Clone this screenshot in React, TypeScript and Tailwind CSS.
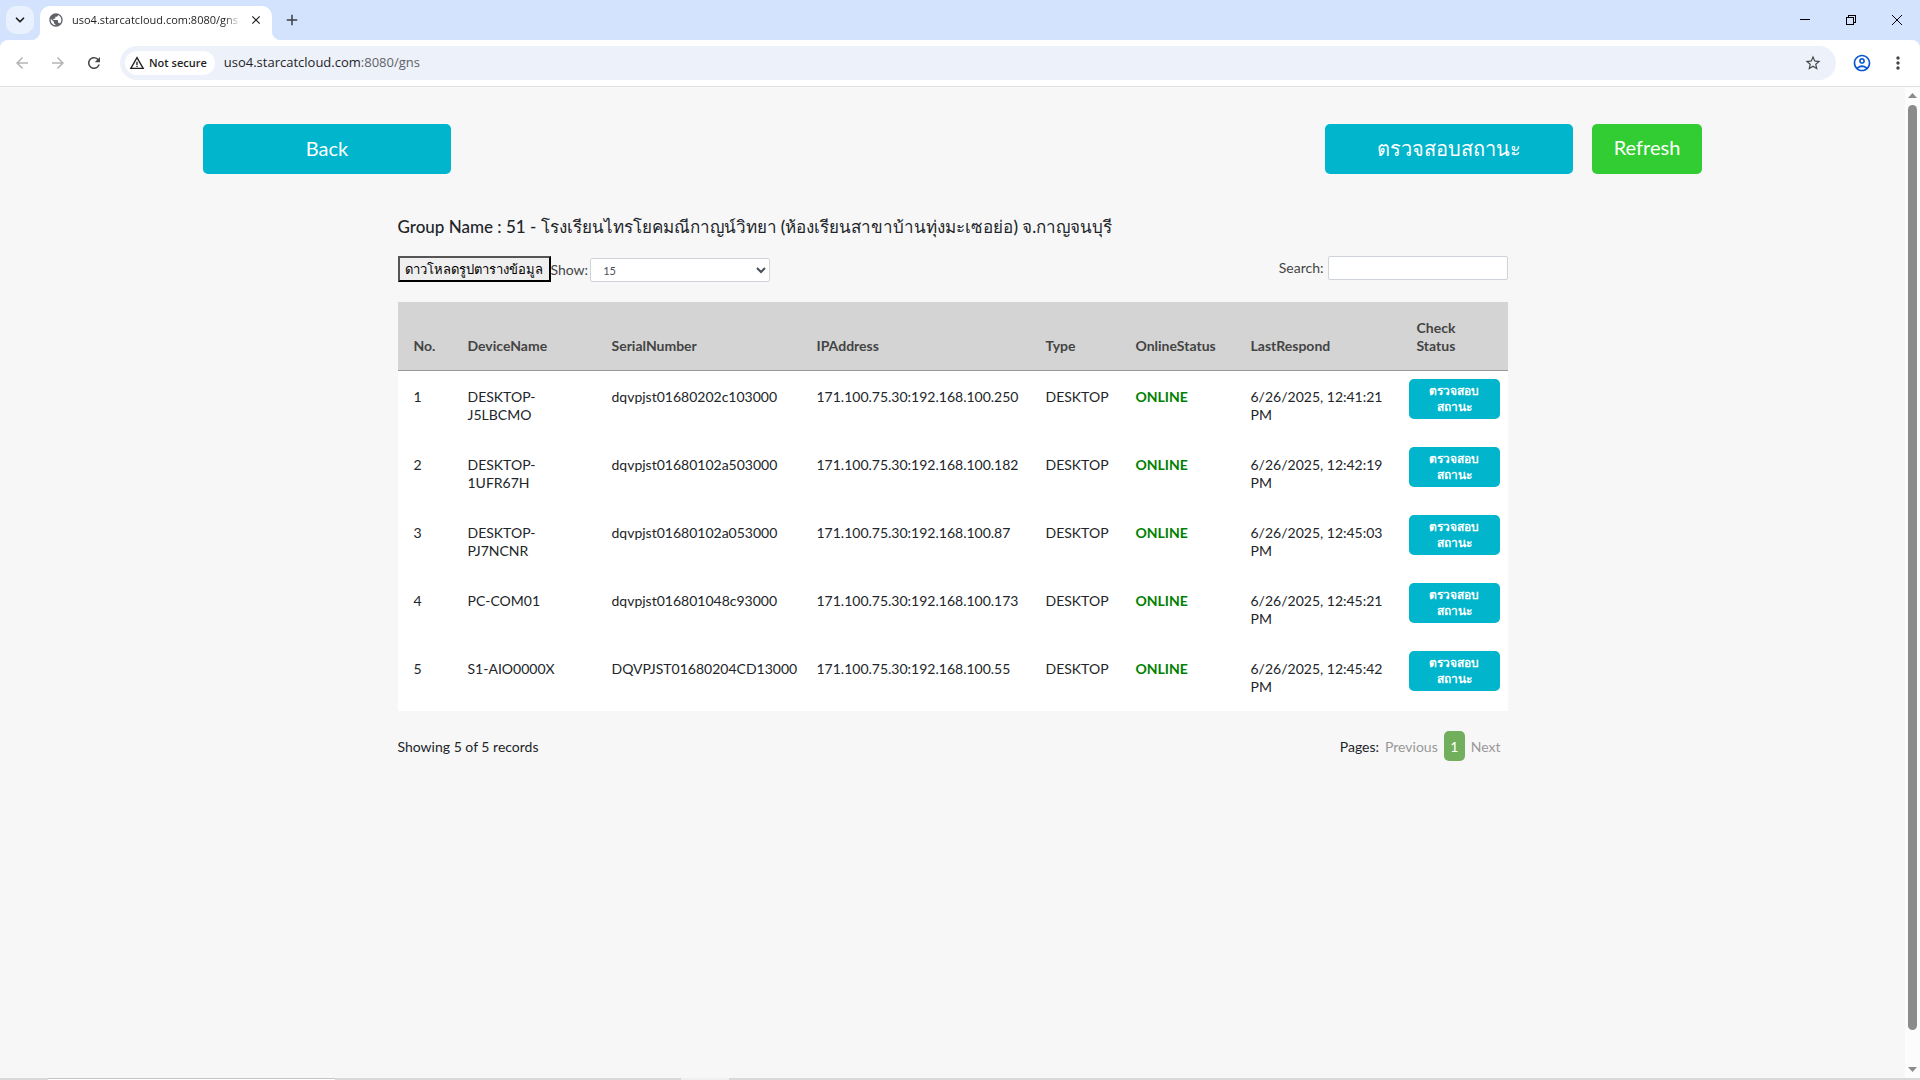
import React from "react";
import { ChevronDown } from "lucide-react";
import {
  MdAdd,
  MdArrowBack,
  MdArrowForward,
  MdClose,
  MdMoreVert,
  MdOutlineAccountCircle,
  MdPublic,
  MdRefresh,
  MdStarBorder,
  MdWarningAmber,
} from "react-icons/md";

interface Device {
  no: number;
  name: string;
  serial: string;
  ip: string;
  type: string;
  status: string;
  lastRespond: string;
}

const devices: Device[] = [
  { no: 1, name: "DESKTOP-J5LBCMO", serial: "dqvpjst01680202c103000", ip: "171.100.75.30:192.168.100.250", type: "DESKTOP", status: "ONLINE", lastRespond: "6/26/2025, 12:41:21 PM" },
  { no: 2, name: "DESKTOP-1UFR67H", serial: "dqvpjst01680102a503000", ip: "171.100.75.30:192.168.100.182", type: "DESKTOP", status: "ONLINE", lastRespond: "6/26/2025, 12:42:19 PM" },
  { no: 3, name: "DESKTOP-PJ7NCNR", serial: "dqvpjst01680102a053000", ip: "171.100.75.30:192.168.100.87", type: "DESKTOP", status: "ONLINE", lastRespond: "6/26/2025, 12:45:03 PM" },
  { no: 4, name: "PC-COM01", serial: "dqvpjst016801048c93000", ip: "171.100.75.30:192.168.100.173", type: "DESKTOP", status: "ONLINE", lastRespond: "6/26/2025, 12:45:21 PM" },
  { no: 5, name: "S1-AIO0000X", serial: "DQVPJST01680204CD13000", ip: "171.100.75.30:192.168.100.55", type: "DESKTOP", status: "ONLINE", lastRespond: "6/26/2025, 12:45:42 PM" },
];

function TabStrip() {
  return (
    <div className="flex h-10 items-end bg-[#d3e3fd]">
      <button aria-label="Search tabs" className="mb-1.5 ml-1.5 flex h-7 w-7 items-center justify-center rounded-[10px] bg-[#e9f0fe]">
        <ChevronDown className="h-3.5 w-3.5 text-[#1f1f1f]" strokeWidth={3} />
      </button>
      <span className="-ml-1 h-2.5 w-2.5 bg-[radial-gradient(circle_at_0_0,#d3e3fd_10px,white_11px)]" />
      <div className="flex h-[34px] w-[232px] items-center rounded-t-[10px] bg-white pb-1.5 pl-2 pr-[9px]">
        <MdPublic className="h-4 w-4 shrink-0 text-[#5f6368]" />
        <span className="ml-2 min-w-0 flex-1 overflow-hidden whitespace-nowrap font-['Open_Sans',sans-serif] text-[11px] text-[#1f1f1f] [mask-image:linear-gradient(to_right,black_90%,transparent)]">
          uso4.starcatcloud.com:8080/gns
        </span>
        <button aria-label="Close tab" className="ml-2">
          <MdClose className="h-3.5 w-3.5 text-[#1f1f1f]" stroke="currentColor" />
        </button>
      </div>
      <span className="h-2.5 w-2.5 bg-[radial-gradient(circle_at_100%_0,#d3e3fd_10px,white_11px)]" />
      <button aria-label="New tab" className="mb-[11px] ml-px">
        <MdAdd className="h-[18px] w-[18px] text-[#3c3f43]" />
      </button>
      <div className="ml-auto flex h-10 items-center">
        <button aria-label="Minimize" className="flex w-[46px] justify-center">
          <svg viewBox="0 0 10 10" className="h-2.5 w-2.5" shapeRendering="crispEdges"><path d="M0 4.500h10" stroke="black" /></svg>
        </button>
        <button aria-label="Restore" className="flex w-[46px] justify-center">
          <svg viewBox="0 0 10 10" className="h-2.5 w-2.5" fill="none" stroke="black" shapeRendering="crispEdges">
            <path d="M.5 2.500h7v7h-7zM2.500 2.500v-2h7v7h-2" />
          </svg>
        </button>
        <button aria-label="Close" className="flex w-[46px] justify-center">
          <svg viewBox="0 0 10 10" className="h-2.5 w-2.5"><path d="M0 0l10 10M10 0L0 10" stroke="black" /></svg>
        </button>
      </div>
    </div>
  );
}

function Toolbar() {
  return (
    <div className="bg-[#d3e3fd]">
      <div className="flex h-[47px] items-center rounded-t-lg border-b border-[#dfe1e4] bg-white pl-[13px] font-['Open_Sans',sans-serif]">
        <button aria-label="Back" className="w-9"><MdArrowBack className="h-[18px] w-[18px] text-[#b4b5b7]" /></button>
        <button aria-label="Forward" className="w-9"><MdArrowForward className="h-[18px] w-[18px] text-[#b4b5b7]" /></button>
        <button aria-label="Reload" className="w-[35px]"><MdRefresh className="h-[18px] w-[18px] text-[#474747]" /></button>
        <div className="flex h-[34px] flex-1 items-center rounded-full bg-[#edf1fa] pl-[5px] pr-3.5">
          <button className="flex h-6 items-center gap-1 rounded-full bg-white pl-1 pr-2">
            <MdWarningAmber className="h-4 w-4 text-[#1f1f1f]" />
            <span className="text-[11px] font-semibold text-[#1f1f1f]">Not secure</span>
          </button>
          <span className="ml-[9px] flex-1 text-[13px] text-[#1f1f1f]">
            uso4.starcatcloud.com<span className="text-[#5f6368]">:8080/gns</span>
          </span>
          <button aria-label="Bookmark this tab"><MdStarBorder className="h-[18px] w-[18px] text-[#474747]" /></button>
        </div>
        <button aria-label="Profile" className="ml-4"><MdOutlineAccountCircle className="h-5 w-5 text-[#0b57d0]" /></button>
        <button aria-label="Menu" className="ml-4 mr-3"><MdMoreVert className="h-5 w-5 text-[#474747]" /></button>
      </div>
    </div>
  );
}

function Scrollbar() {
  return (
    <div className="flex w-[15px] flex-col items-center bg-[#fcfcfc] py-1.5" aria-hidden="true">
      <svg viewBox="0 0 9 5" className="h-[5px] w-[9px]"><path d="M4.500 0 9 5H0z" fill="#8b8b8b" /></svg>
      <div className="mb-[37px] mt-[7px] w-[9px] flex-1 rounded-full bg-[#8b8b8b]" />
      <svg viewBox="0 0 9 5" className="h-[5px] w-[9px]"><path d="M0 0h9L4.500 5z" fill="#8b8b8b" /></svg>
    </div>
  );
}

function DeviceTable() {
  return (
    <table className="w-full table-fixed border-separate border-spacing-0 bg-white text-left leading-[18px]">
      <colgroup>
        <col className="w-[54px]" />
        <col className="w-[144px]" />
        <col className="w-[205px]" />
        <col className="w-[229px]" />
        <col className="w-[90px]" />
        <col className="w-[115px]" />
        <col className="w-[166px]" />
        <col className="w-[107px]" />
      </colgroup>
      <thead>
        <tr className="h-[69px] bg-[#d4d4d4] align-bottom text-[#444]">
          {["No.", "DeviceName", "SerialNumber", "IPAddress", "Type", "OnlineStatus", "LastRespond"].map((title) => (
            <th key={title} className="border-b border-[#999] px-4 pb-[15px] font-bold">{title}</th>
          ))}
          <th className="border-b border-[#999] px-4 pb-[15px] font-bold">Check<br />Status</th>
        </tr>
      </thead>
      <tbody>
        {devices.map((device) => (
          <tr key={device.no} className="h-[68px] align-top">
            <td className="px-4 pt-[17px]">{device.no}</td>
            <td className="px-4 pt-[17px]">{device.name}</td>
            <td className="px-4 pt-[17px]">{device.serial}</td>
            <td className="px-4 pt-[17px]">{device.ip}</td>
            <td className="px-4 pt-[17px]">{device.type}</td>
            <td className="px-4 pt-[17px] font-bold text-[#008000]">{device.status}</td>
            <td className="px-4 pt-[17px]">{device.lastRespond}</td>
            <td className="px-2 pt-2">
              <button className="h-10 w-full rounded-[5px] bg-[#00b5cc] text-[12px] font-bold leading-4 text-white">
                ตรวจสอบ<br />สถานะ
              </button>
            </td>
          </tr>
        ))}
      </tbody>
    </table>
  );
}

export default function App() {
  return (
    <div className="flex min-h-screen flex-col bg-[#f7f7f7]">
      <TabStrip />
      <Toolbar />
      <div className="flex flex-1">
        <main className="flex-1 font-[Lato,sans-serif] text-[14px] text-[#212529]">
          <div className="mx-auto flex max-w-[1499px] pt-[37px] text-[20px] text-white">
            <button className="h-[50px] w-[248px] rounded-[5px] bg-[#00b5cc] pb-0.5">Back</button>
            <button className="ml-auto h-[50px] w-[248px] rounded-[5px] bg-[#00b5cc] pb-0.5">ตรวจสอบสถานะ</button>
            <button className="ml-[19px] h-[50px] w-[110px] rounded-[5px] bg-[#32cd32] pb-1">Refresh</button>
          </div>

          <div className="mx-auto max-w-[1110px] pt-10">
            <h1 className="text-[17px] font-medium leading-[26px]">
              Group Name : 51 - โรงเรียนไทรโยคมณีกาญน์วิทยา (ห้องเรียนสาขาบ้านทุ่งมะเซอย่อ) จ.กาญจนบุรี
            </h1>

            <div className="flex items-start pt-4 text-[#444]">
              <button className="h-[26px] w-[153px] whitespace-nowrap border-2 border-[#555] border-b-black border-r-black bg-[#efefef] pt-0.5 text-[13px] text-black">
                ดาวโหลดรูปตารางข้อมูล
              </button>
              <label htmlFor="page_size" className="leading-7">Show:</label>
              <select id="page_size" className="ml-0.5 mt-0.5 h-6 w-[180px] rounded-xs border border-[#ced4da] bg-white pl-2 text-[11px] text-[#495057]">
                <option>15</option>
              </select>
              <label htmlFor="search" className="ml-auto leading-6">Search:</label>
              <input id="search" type="text" className="ml-1 h-6 w-[180px] rounded-xs border border-[#ced4da] bg-white px-2" />
            </div>

            <div className="pt-[18px]">
              <DeviceTable />
            </div>

            <div className="flex items-center pt-5">
              <span>Showing 5 of 5 records</span>
              <span className="ml-auto">Pages:</span>
              <button className="ml-1.5 text-[#999]" disabled>Previous</button>
              <button className="ml-1.5 h-[30px] w-[21px] rounded-[5px] bg-[#71af5c] text-white">1</button>
              <button className="ml-1.5 mr-[7px] text-[#999]" disabled>Next</button>
            </div>
          </div>
        </main>
        <Scrollbar />
      </div>
      {/* top edge of the taskbar */}
      <div className="flex h-0.5 bg-[#d9d9d9]">
        <div className="ml-12 w-[287px] border-t border-[#c4c4c4] bg-white" />
        <div className="ml-[346px] w-12 bg-[#efefef]" />
      </div>
    </div>
  );
}
